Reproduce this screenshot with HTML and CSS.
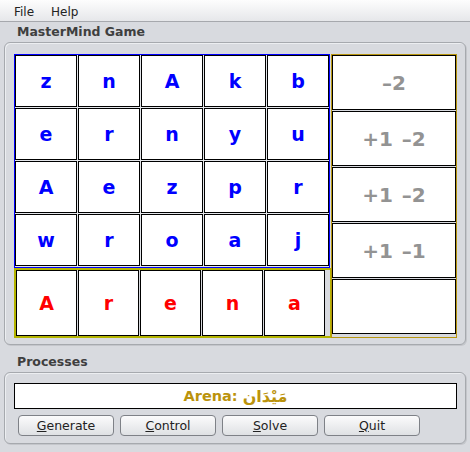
FILE: index.html
```html
<!doctype html>
<html>
<head>
<meta charset="utf-8">
<title>MasterMind</title>
<link rel="stylesheet" href="styles.css">
</head>
<body>
	<div class="menubar">
		<span class="menu">File</span>
		<span class="menu">Help</span>
	</div>

	<div class="caption">MasterMind Game</div>
	<div class="panel game">
		<div class="board">
			<div class="left">
				<div class="tries">
					<div class="cell">z</div><div class="cell">n</div><div class="cell">A</div><div class="cell">k</div><div class="cell">b</div>
					<div class="cell">e</div><div class="cell">r</div><div class="cell">n</div><div class="cell">y</div><div class="cell">u</div>
					<div class="cell">A</div><div class="cell">e</div><div class="cell">z</div><div class="cell">p</div><div class="cell">r</div>
					<div class="cell">w</div><div class="cell">r</div><div class="cell">o</div><div class="cell">a</div><div class="cell">j</div>
				</div>
				<div class="guess">
					<div class="cell">A</div><div class="cell">r</div><div class="cell">e</div><div class="cell">n</div><div class="cell">a</div>
				</div>
			</div>
			<div class="scores">
				<div class="score">–2</div>
				<div class="score">+1 –2</div>
				<div class="score">+1 –2</div>
				<div class="score">+1 –1</div>
				<div class="score"></div>
			</div>
		</div>
	</div>

	<div class="caption">Processes</div>
	<div class="panel proc">
		<div class="status"><span>Arena:</span><span class="ar" lang="ar" dir="rtl">مَيْدَان</span></div>
		<div class="buttons">
			<button class="btn"><u>G</u>enerate</button>
			<button class="btn"><u>C</u>ontrol</button>
			<button class="btn"><u>S</u>olve</button>
			<button class="btn"><u>Q</u>uit</button>
		</div>
	</div>
</body>
</html>
```

FILE: styles.css
```css
*{margin:0;padding:0;box-sizing:border-box;}
body{
	background:#d8dadf;
	font-family:"DejaVu Sans", sans-serif;
	color:#222;
	width:470px;
	height:452px;
	overflow:hidden;
}

.menubar{
	height:22px;
	padding:2px 0 0 8px;
	display:flex;
	align-items:center;
	font-size:12px;
	background:linear-gradient(#fdfdfd,#e6e7ea);
	border-bottom:1px solid #a6a8ad;
}
.menu{padding:0 6px;}
.menu + .menu{margin-left:5px;}

.caption{
	font-size:12.5px;
	font-weight:bold;
	line-height:16px;
	color:#3f3f3f;
	padding-left:17px;
	margin:2px 0 2px;
}
.panel + .caption{margin-top:9px;}

.panel{
	margin:0 4px;
	border:1px solid #a6a9ae;
	border-radius:6px;
	box-shadow:inset 1px 1px 0 #eceef1, 1px 1px 0 #c4c6cb;
	background:#d8dadf;
}
.game{padding:11px 7px 6px 9px;}

.board{display:flex;align-items:flex-start;}

.tries{
	width:316px;
	border:1px solid #0000ff;
	display:grid;
	grid-template-columns:repeat(5,62px);
	grid-template-rows:repeat(4,52px);
	gap:1px;
	padding-bottom:1px;
	background:#e4e6ea;
}
.guess{
	width:318px;
	height:70px;
	border:2px solid #b4b400;
	display:grid;
	grid-template-columns:repeat(5,61px);
	grid-template-rows:66px;
	gap:1px;
}
.cell{
	background:#fff;
	border:1px solid #000;
	display:flex;
	align-items:center;
	justify-content:center;
	font-size:19px;
	font-weight:bold;
	color:#0000ff;
}
.guess .cell{color:#ff0000;}

.scores{
	width:126px;
	height:284px;
	margin-left:-1px;
	border:1px solid #b8960f;
	display:flex;
	flex-direction:column;
	gap:1px;
}
.score{
	height:55px;
	flex:none;
	background:#fff;
	border:1px solid #000;
	display:flex;
	align-items:center;
	justify-content:center;
	font-size:20px;
	font-weight:bold;
	color:#939393;
	word-spacing:2px;
}

.proc{padding:10px 8px 7px 9px;}
.status{
	height:26px;
	background:#fff;
	border:1px solid #000;
	display:flex;
	align-items:center;
	justify-content:center;
	gap:5px;
	font-size:14.5px;
	font-weight:bold;
	color:#bb930c;
}
.ar{unicode-bidi:isolate;font-size:16px;}

.buttons{
	display:flex;
	gap:6px;
	margin:6px 0 0 4px;
}
.btn{
	width:96px;
	height:21px;
	font:12.5px "DejaVu Sans", sans-serif;
	color:#222;
	border:1px solid #7e8187;
	border-radius:4px;
	background:linear-gradient(#fbfbfc,#dfe1e4);
}
```
